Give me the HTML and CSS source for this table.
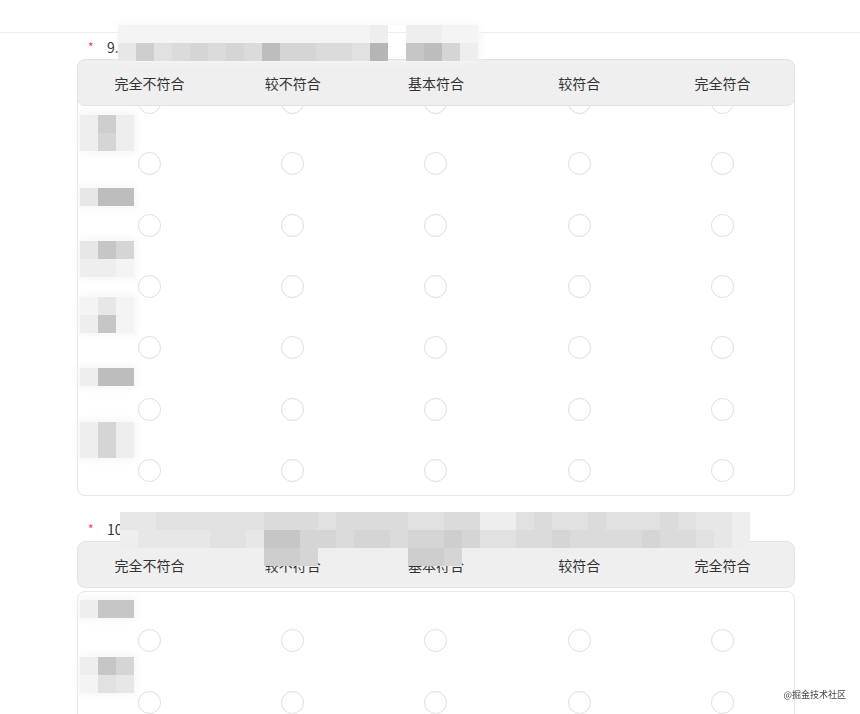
FILE: index.html
```html
<!DOCTYPE html>
<html lang="zh-CN">
<head>
<meta charset="utf-8">
<title>问卷</title>
<link rel="stylesheet" href="styles.css">
</head>
<body>
<div class="topbar"></div>
<main class="survey">
  <section class="question">
    <div class="q-title"><span class="req">*</span><span class="num">9.</span>
      <div class="mosaic mosaic-t9">
        <i class="s0"></i><i class="s0"></i><i class="s0"></i><i class="s0"></i><i class="s0"></i><i class="s0"></i><i class="s0"></i><i class="s0"></i><i class="s0"></i><i class="s0"></i><i class="s0"></i><i class="s0"></i><i class="s0"></i><i class="s0"></i><i class="s1"></i><i class="e"></i><i class="s1"></i><i class="s1"></i><i class="s0"></i><i class="s0"></i>
        <i class="s2"></i><i class="s6"></i><i class="s3"></i><i class="s4"></i><i class="s5"></i><i class="s4"></i><i class="s5"></i><i class="s4"></i><i class="s8"></i><i class="s5"></i><i class="s5"></i><i class="s4"></i><i class="s4"></i><i class="s3"></i><i class="s9"></i><i class="e"></i><i class="s7"></i><i class="s8"></i><i class="s5"></i><i class="s1"></i>
      </div>
    </div>
    <div class="matrix-head"><span>完全不符合</span><span>较不符合</span><span>基本符合</span><span>较符合</span><span>完全符合</span></div>
    <div class="matrix-body scrolled">
      <div class="m-row">
        <div class="m-label"></div>
        <span class="radio"></span><span class="radio"></span><span class="radio"></span><span class="radio"></span><span class="radio"></span>
      </div>
      <div class="m-row">
        <div class="m-label up6"><div class="mosaic lab"><i class="s1"></i><i class="s6"></i><i class="s1"></i><i class="s1"></i><i class="s5"></i><i class="s1"></i></div></div>
        <span class="radio"></span><span class="radio"></span><span class="radio"></span><span class="radio"></span><span class="radio"></span>
      </div>
      <div class="m-row">
        <div class="m-label down5"><div class="mosaic lab"><i class="s2"></i><i class="s8"></i><i class="s8"></i></div></div>
        <span class="radio"></span><span class="radio"></span><span class="radio"></span><span class="radio"></span><span class="radio"></span>
      </div>
      <div class="m-row">
        <div class="m-label up3"><div class="mosaic lab"><i class="s2"></i><i class="s7"></i><i class="s5"></i><i class="s1"></i><i class="s1"></i><i class="s0"></i></div></div>
        <span class="radio"></span><span class="radio"></span><span class="radio"></span><span class="radio"></span><span class="radio"></span>
      </div>
      <div class="m-row">
        <div class="m-label up8"><div class="mosaic lab"><i class="s0"></i><i class="s2"></i><i class="s0"></i><i class="s1"></i><i class="s7"></i><i class="s0"></i></div></div>
        <span class="radio"></span><span class="radio"></span><span class="radio"></span><span class="radio"></span><span class="radio"></span>
      </div>
      <div class="m-row">
        <div class="m-label down1"><div class="mosaic lab"><i class="s1"></i><i class="s8"></i><i class="s8"></i></div></div>
        <span class="radio"></span><span class="radio"></span><span class="radio"></span><span class="radio"></span><span class="radio"></span>
      </div>
      <div class="m-row">
        <div class="m-label up6"><div class="mosaic lab"><i class="s1"></i><i class="s5"></i><i class="s1"></i><i class="s1"></i><i class="s5"></i><i class="s1"></i></div></div>
        <span class="radio"></span><span class="radio"></span><span class="radio"></span><span class="radio"></span><span class="radio"></span>
      </div>
    </div>
  </section>

  <section class="question">
    <div class="q-title"><span class="req">*</span><span class="num">10</span>
      <div class="mosaic mosaic-t10">
        <i class="s2"></i><i class="s2"></i><i class="s3"></i><i class="s3"></i><i class="s3"></i><i class="s3"></i><i class="s3"></i><i class="s3"></i><i class="s4"></i><i class="s4"></i><i class="s4"></i><i class="s3"></i><i class="s4"></i><i class="s4"></i><i class="s4"></i><i class="s4"></i><i class="s3"></i><i class="s3"></i><i class="s4"></i><i class="s4"></i><i class="s1"></i><i class="s1"></i><i class="s3"></i><i class="s4"></i><i class="s3"></i><i class="s3"></i><i class="s4"></i><i class="s3"></i><i class="s3"></i><i class="s3"></i><i class="s4"></i><i class="s3"></i><i class="s2"></i><i class="s2"></i><i class="s1"></i>
        <i class="s1"></i><i class="s2"></i><i class="s2"></i><i class="s2"></i><i class="s2"></i><i class="s3"></i><i class="s3"></i><i class="s2"></i><i class="s7"></i><i class="s7"></i><i class="s5"></i><i class="s5"></i><i class="s4"></i><i class="s5"></i><i class="s5"></i><i class="s4"></i><i class="s5"></i><i class="s5"></i><i class="s6"></i><i class="s5"></i><i class="s3"></i><i class="s3"></i><i class="s4"></i><i class="s4"></i><i class="s5"></i><i class="s4"></i><i class="s4"></i><i class="s4"></i><i class="s4"></i><i class="s5"></i><i class="s4"></i><i class="s4"></i><i class="s3"></i><i class="s2"></i><i class="s1"></i>
        <i class="e"></i><i class="e"></i><i class="e"></i><i class="e"></i><i class="e"></i><i class="e"></i><i class="e"></i><i class="e"></i><i class="s6"></i><i class="s6"></i><i class="s5"></i><i class="e"></i><i class="e"></i><i class="e"></i><i class="e"></i><i class="e"></i><i class="s6"></i><i class="s6"></i><i class="s5"></i><i class="e"></i>
      </div>
    </div>
    <div class="matrix-head"><span>完全不符合</span><span>较不符合</span><span>基本符合</span><span>较符合</span><span>完全符合</span></div>
    <div class="matrix-body">
      <div class="m-row">
        <div class="m-label down2"><div class="mosaic lab"><i class="s1"></i><i class="s7"></i><i class="s7"></i></div></div>
        <span class="radio"></span><span class="radio"></span><span class="radio"></span><span class="radio"></span><span class="radio"></span>
      </div>
      <div class="m-row">
        <div class="m-label up3"><div class="mosaic lab"><i class="s1"></i><i class="s7"></i><i class="s5"></i><i class="s0"></i><i class="s3"></i><i class="s2"></i></div></div>
        <span class="radio"></span><span class="radio"></span><span class="radio"></span><span class="radio"></span><span class="radio"></span>
      </div>
      <div class="m-row">
        <div class="m-label"></div>
        <span class="radio"></span><span class="radio"></span><span class="radio"></span><span class="radio"></span><span class="radio"></span>
      </div>
    </div>
  </section>
</main>
<div class="watermark">@掘金技术社区</div>
</body>
</html>
```
FILE: styles.css
```css
* { box-sizing: border-box; }
html, body { margin: 0; padding: 0; background: #fff; }
body {
  font-family: "Noto Sans CJK SC", "Microsoft YaHei", "Noto Sans", sans-serif;
  color: #333;
  font-size: 14px;
}
.topbar {
  height: 33px;
  border-bottom: 1px solid #ededed;
}
.survey {
  padding: 4px 65px 0 77px;
}
.question + .question { margin-top: 23px; }
.q-title {
  position: relative;
  height: 20px;
  line-height: 20px;
  padding-left: 11px;
  font-size: 14px;
  color: #333;
  display: flex;
  align-items: center;
}
.req {
  display: inline-block;
  width: 19px;
  color: #f04545;
  font-size: 12px;
  line-height: 12px;
  margin-top: -1px;
}
.num { line-height: 20px; }
.mosaic {
  display: grid;
  grid-auto-rows: 18px;
}
.mosaic i { display: block; }
.mosaic-t9 {
  position: absolute;
  left: 41px;
  top: -12px;
  z-index: 3;
  grid-template-columns: repeat(20, 18px);
  box-shadow: 2px 0 6px 2px rgba(245, 245, 245, 0.8);
  border-radius: 0 8px 8px 0;
}
.mosaic-t10 {
  position: absolute;
  left: 43px;
  top: -7px;
  z-index: 3;
  grid-template-columns: repeat(35, 18px);
}
.lab {
  grid-template-columns: repeat(3, 18px);
  box-shadow: 0 0 6px 3px rgba(244, 244, 244, 0.7);
}
.e { background: transparent; }
.s0 { background: #f4f4f4; }
.s1 { background: #eeeeee; }
.s2 { background: #e7e7e7; }
.s3 { background: #e1e1e1; }
.s4 { background: #dbdbdb; }
.s5 { background: #d5d5d5; }
.s6 { background: #cecece; }
.s7 { background: #c6c6c6; }
.s8 { background: #bdbdbd; }
.s9 { background: #b5b5b5; }

.matrix-head {
  position: relative;
  z-index: 2;
  margin-top: 2px;
  height: 47px;
  background: #efefef;
  border: 1px solid #e3e3e3;
  border-radius: 8px;
  display: grid;
  grid-template-columns: repeat(5, 1fr);
  align-items: center;
  justify-items: center;
  font-size: 14px;
  color: #333;
}
.matrix-body {
  position: relative;
  z-index: 1;
  margin-top: 3px;
  padding: 6px 0 6px;
  border: 1px solid #e6e6e6;
  border-radius: 8px;
  background: #fff;
}
.matrix-body.scrolled {
  margin-top: -47px;
  padding-top: 0;
}
.m-row {
  display: grid;
  grid-template-columns: repeat(5, 1fr);
  grid-template-rows: 24px 37.33px;
}
.m-label {
  grid-column: 1;
  grid-row: 1;
  justify-self: start;
  align-self: start;
  margin-left: 2px;
}
.up3 { margin-top: -3px; }
.up6 { margin-top: -6px; }
.up8 { margin-top: -8px; }
.down1 { margin-top: 1px; }
.down2 { margin-top: 2px; }
.down5 { margin-top: 5px; }
.radio {
  grid-row: 2;
  justify-self: center;
  align-self: center;
  width: 23px;
  height: 23px;
  border-radius: 50%;
  border: 1px solid #dedede;
  background: #fff;
}
.watermark {
  position: fixed;
  right: 14px;
  bottom: 13px;
  z-index: 5;
  white-space: nowrap;
  font-family: "Noto Sans CJK SC", "DejaVu Sans", sans-serif;
  font-size: 9px;
  line-height: 12px;
  color: #444;
}
```
